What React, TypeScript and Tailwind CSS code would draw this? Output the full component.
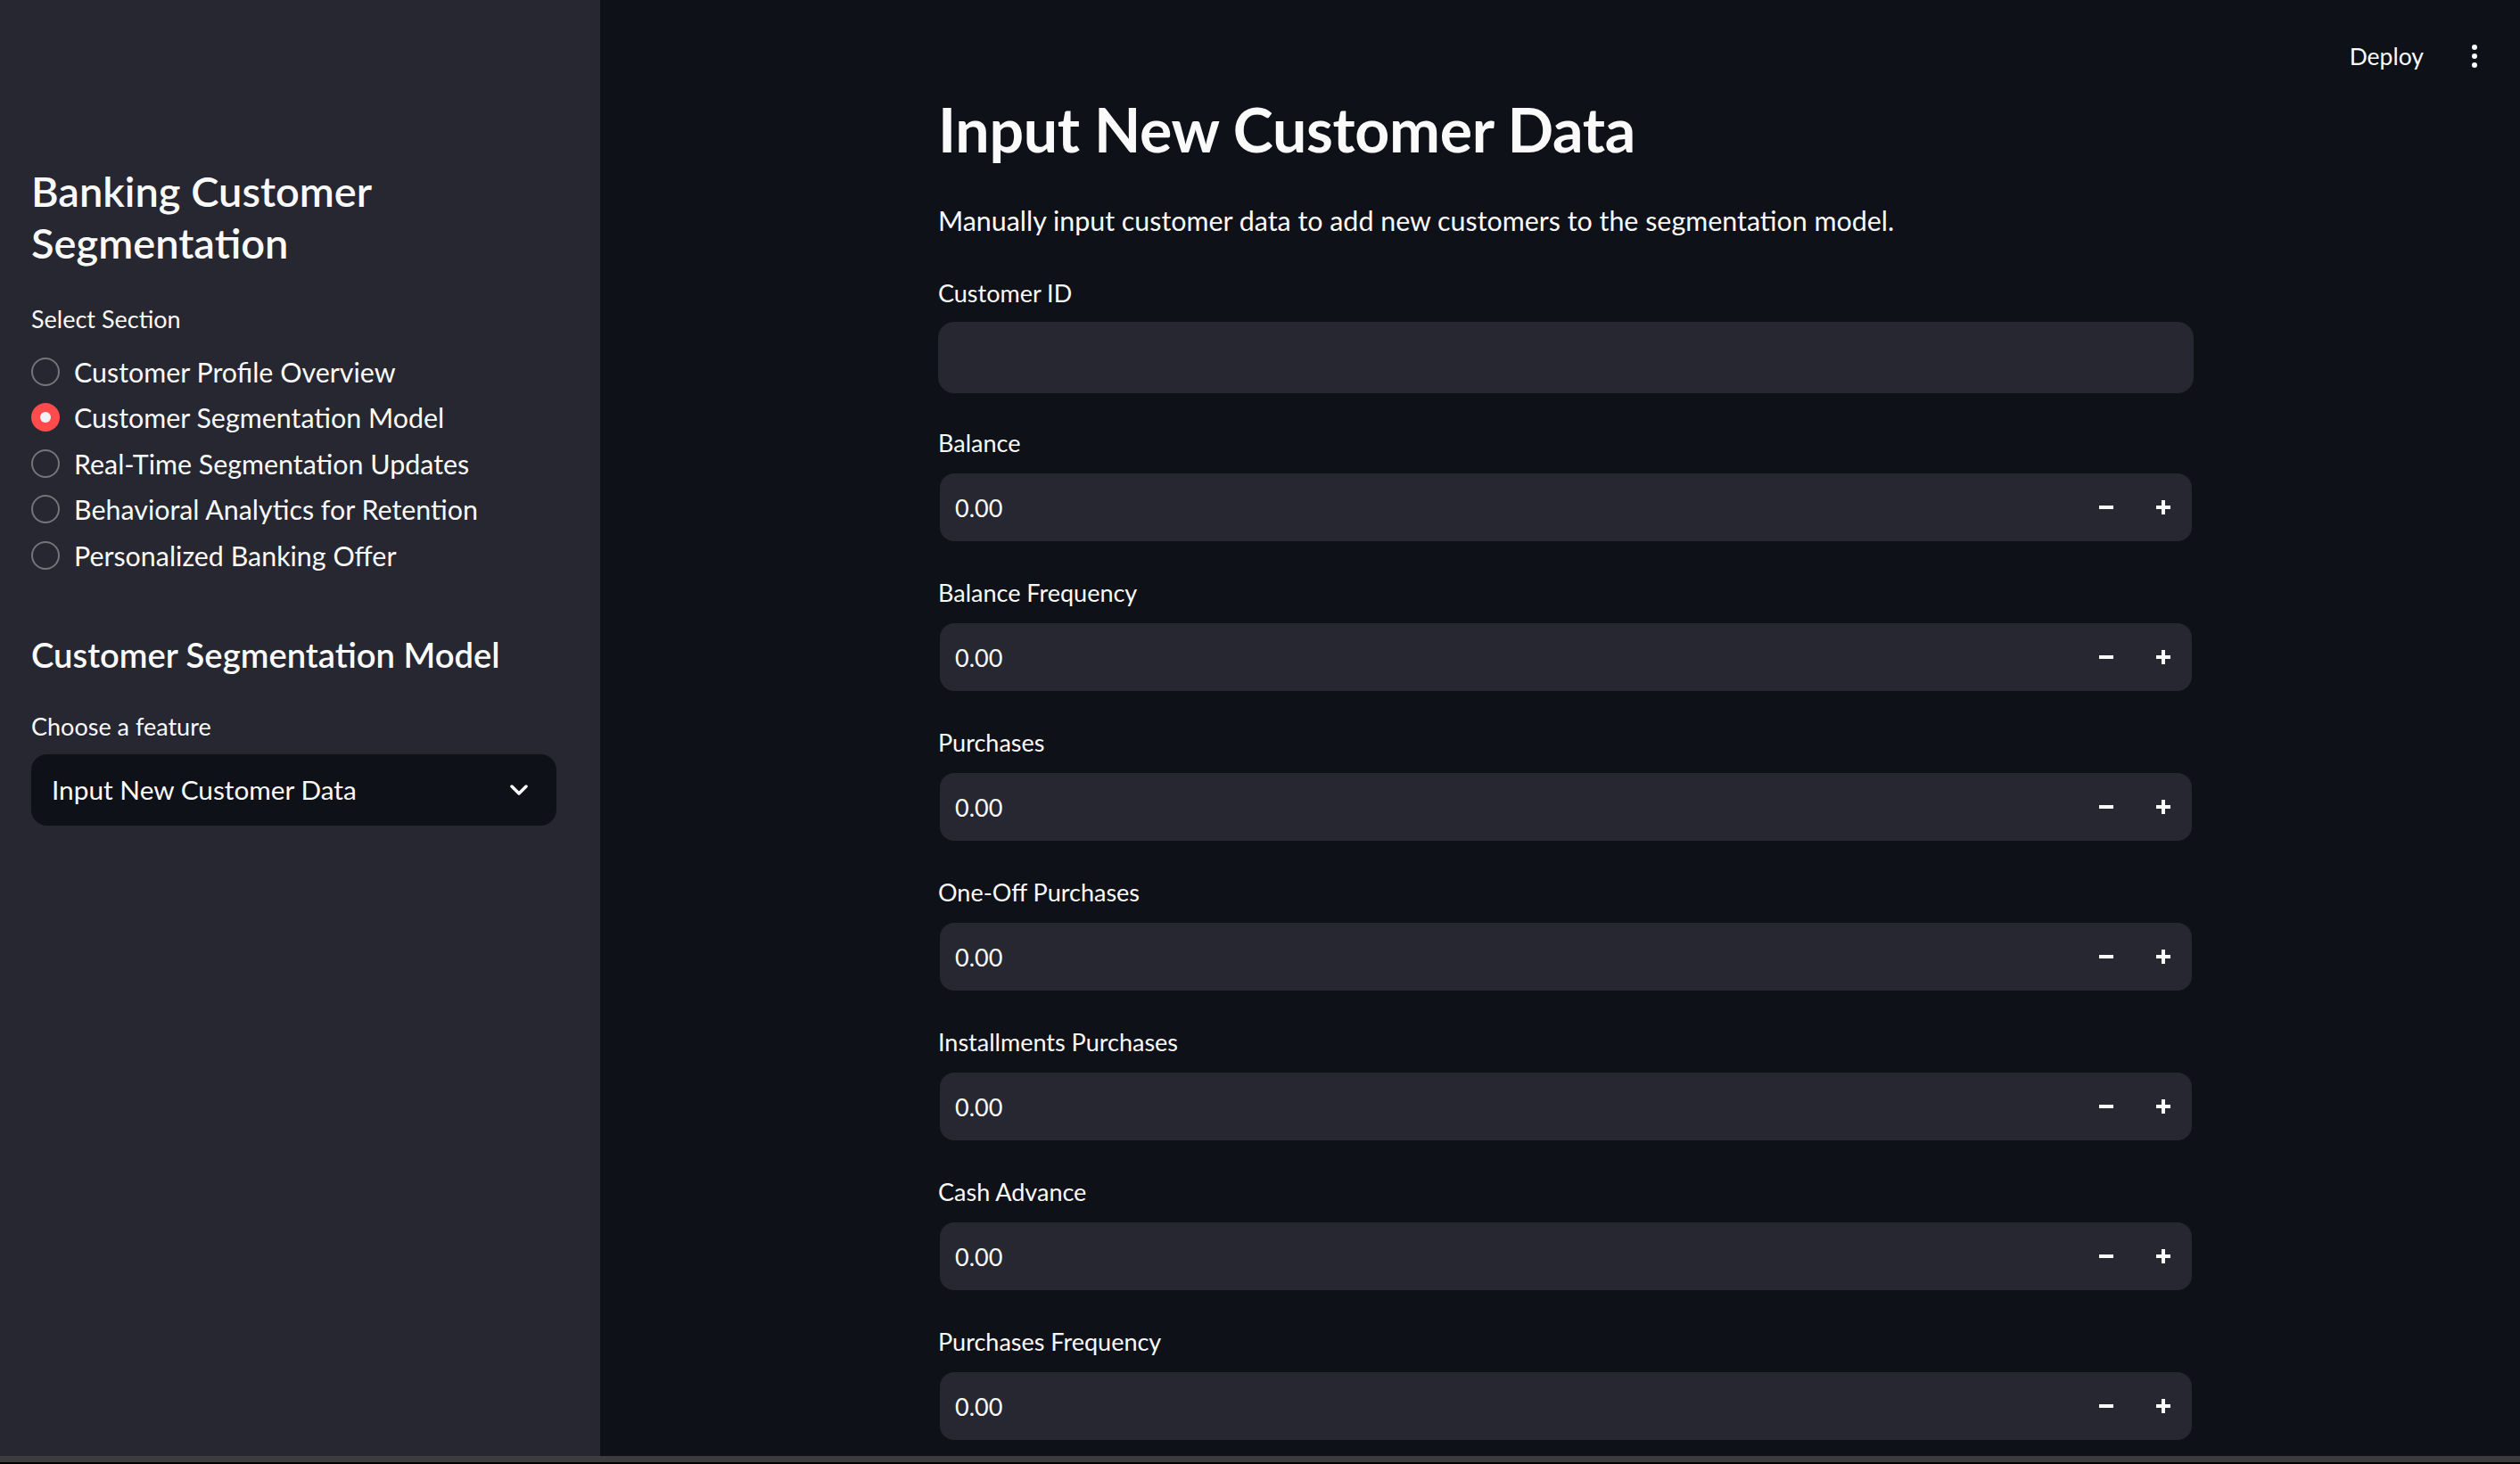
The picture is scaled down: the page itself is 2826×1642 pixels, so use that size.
import React from "react";

const radios = [
  "Customer Profile Overview",
  "Customer Segmentation Model",
  "Real-Time Segmentation Updates",
  "Behavioral Analytics for Retention",
  "Personalized Banking Offer",
];

const numberFields = [
  "Balance",
  "Balance Frequency",
  "Purchases",
  "One-Off Purchases",
  "Installments Purchases",
  "Cash Advance",
  "Purchases Frequency",
];

function Minus() {
  return (
    <svg width="16" height="16" viewBox="0 0 16 16">
      <rect x="0" y="6" width="16" height="4" fill="#fafafa" />
    </svg>
  );
}

function Plus() {
  return (
    <svg width="16" height="16" viewBox="0 0 16 16">
      <rect x="0" y="6" width="16" height="4" fill="#fafafa" />
      <rect x="6" y="0" width="4" height="16" fill="#fafafa" />
    </svg>
  );
}

function Label({ children }: { children: React.ReactNode }) {
  return <div className="h-[36px] text-[27px] leading-[36px] text-[#fafafa]">{children}</div>;
}

export default function App() {
  return (
    <div className="flex h-[1642px] w-[2826px] flex-col overflow-hidden bg-[#0e1117] font-['Lato',sans-serif] text-[#fafafa]">
      <div className="flex h-[1633px] min-h-0">
        {/* Sidebar */}
        <aside className="flex w-[673px] shrink-0 flex-col bg-[#262730] pl-[35px] pr-[49px] pt-[185px]">
          <h1 className="text-[47px] font-semibold leading-[58px]">
            Banking Customer
            <br />
            Segmentation
          </h1>
          <div className="mt-[39px]">
            <Label>Select Section</Label>
          </div>
          <div className="mt-[15px] flex flex-col">
            {radios.map((r, i) => (
              <div key={r} className="flex h-[51.5px] items-center gap-[16px]">
                {i === 1 ? (
                  <div className="flex h-[32px] w-[32px] items-center justify-center rounded-full bg-[#ff4b4b]">
                    <div className="h-[12px] w-[12px] rounded-full bg-[#f0f2f6]" />
                  </div>
                ) : (
                  <div className="h-[32px] w-[32px] rounded-full border-2 border-[#74757b]" />
                )}
                <span className="text-[30.4px] leading-none">{r}</span>
              </div>
            ))}
          </div>
          <h2 className="mt-[61px] text-[38.2px] font-semibold leading-[48px]">Customer Segmentation Model</h2>
          <div className="mt-[39px]">
            <Label>Choose a feature</Label>
          </div>
          <div className="mt-[13px] flex h-[80px] items-center justify-between rounded-[18px] bg-[#0e1117] pl-[23px] pr-[32px]">
            <span className="text-[29.8px] leading-none">Input New Customer Data</span>
            <svg width="20" height="12" viewBox="0 0 20 12" fill="none">
              <path d="M2 2 L10 10 L18 2" stroke="#fafafa" strokeWidth="3.5" strokeLinecap="round" strokeLinejoin="round" />
            </svg>
          </div>
        </aside>

        {/* Main */}
        <main className="relative min-w-0 flex-1 overflow-hidden bg-[#0e1117]">
          <div className="absolute right-[48px] top-[33px] flex h-[60px] items-center gap-[54px]">
            <span className="text-[26.5px] leading-none">Deploy</span>
            <div className="flex flex-col items-center gap-[4px]">
              <div className="h-[6px] w-[6px] rounded-full bg-[#fafafa]" />
              <div className="h-[6px] w-[6px] rounded-full bg-[#fafafa]" />
              <div className="h-[6px] w-[6px] rounded-full bg-[#fafafa]" />
            </div>
          </div>

          <div className="w-[1787px] pl-[379px] pt-[105px]">
            <div className="w-[1408px]">
              <h1 className="text-[68px] font-bold leading-[79px] tracking-[-0.3px]">Input New Customer Data</h1>
              <p className="mt-[43px] text-[30.4px] leading-[40px]">
                Manually input customer data to add new customers to the segmentation model.
              </p>

              <div className="mt-[44px] flex flex-col gap-[38px]">
                <div className="flex flex-col">
                  <Label>Customer ID</Label>
                  <div className="mt-[14px] h-[80px] rounded-[18px] bg-[#262730]" />
                </div>
                {numberFields.map((f) => (
                  <div key={f} className="flex flex-col">
                    <Label>{f}</Label>
                    <div className="mt-[14px] h-[80px] p-[2px]">
                      <div className="flex h-[76px] items-center rounded-[16px] bg-[#262730]">
                        <span className="flex-1 pl-[17px] text-[27px] leading-none">0.00</span>
                        <div className="flex h-full w-[64px] items-center justify-center">
                          <Minus />
                        </div>
                        <div className="flex h-full w-[64px] items-center justify-center">
                          <Plus />
                        </div>
                      </div>
                    </div>
                  </div>
                ))}
              </div>
            </div>
          </div>
        </main>
      </div>
      <div className="h-[7px] shrink-0 bg-[#3c3c3c]" />
      <div className="h-[2px] shrink-0 bg-black" />
    </div>
  );
}
